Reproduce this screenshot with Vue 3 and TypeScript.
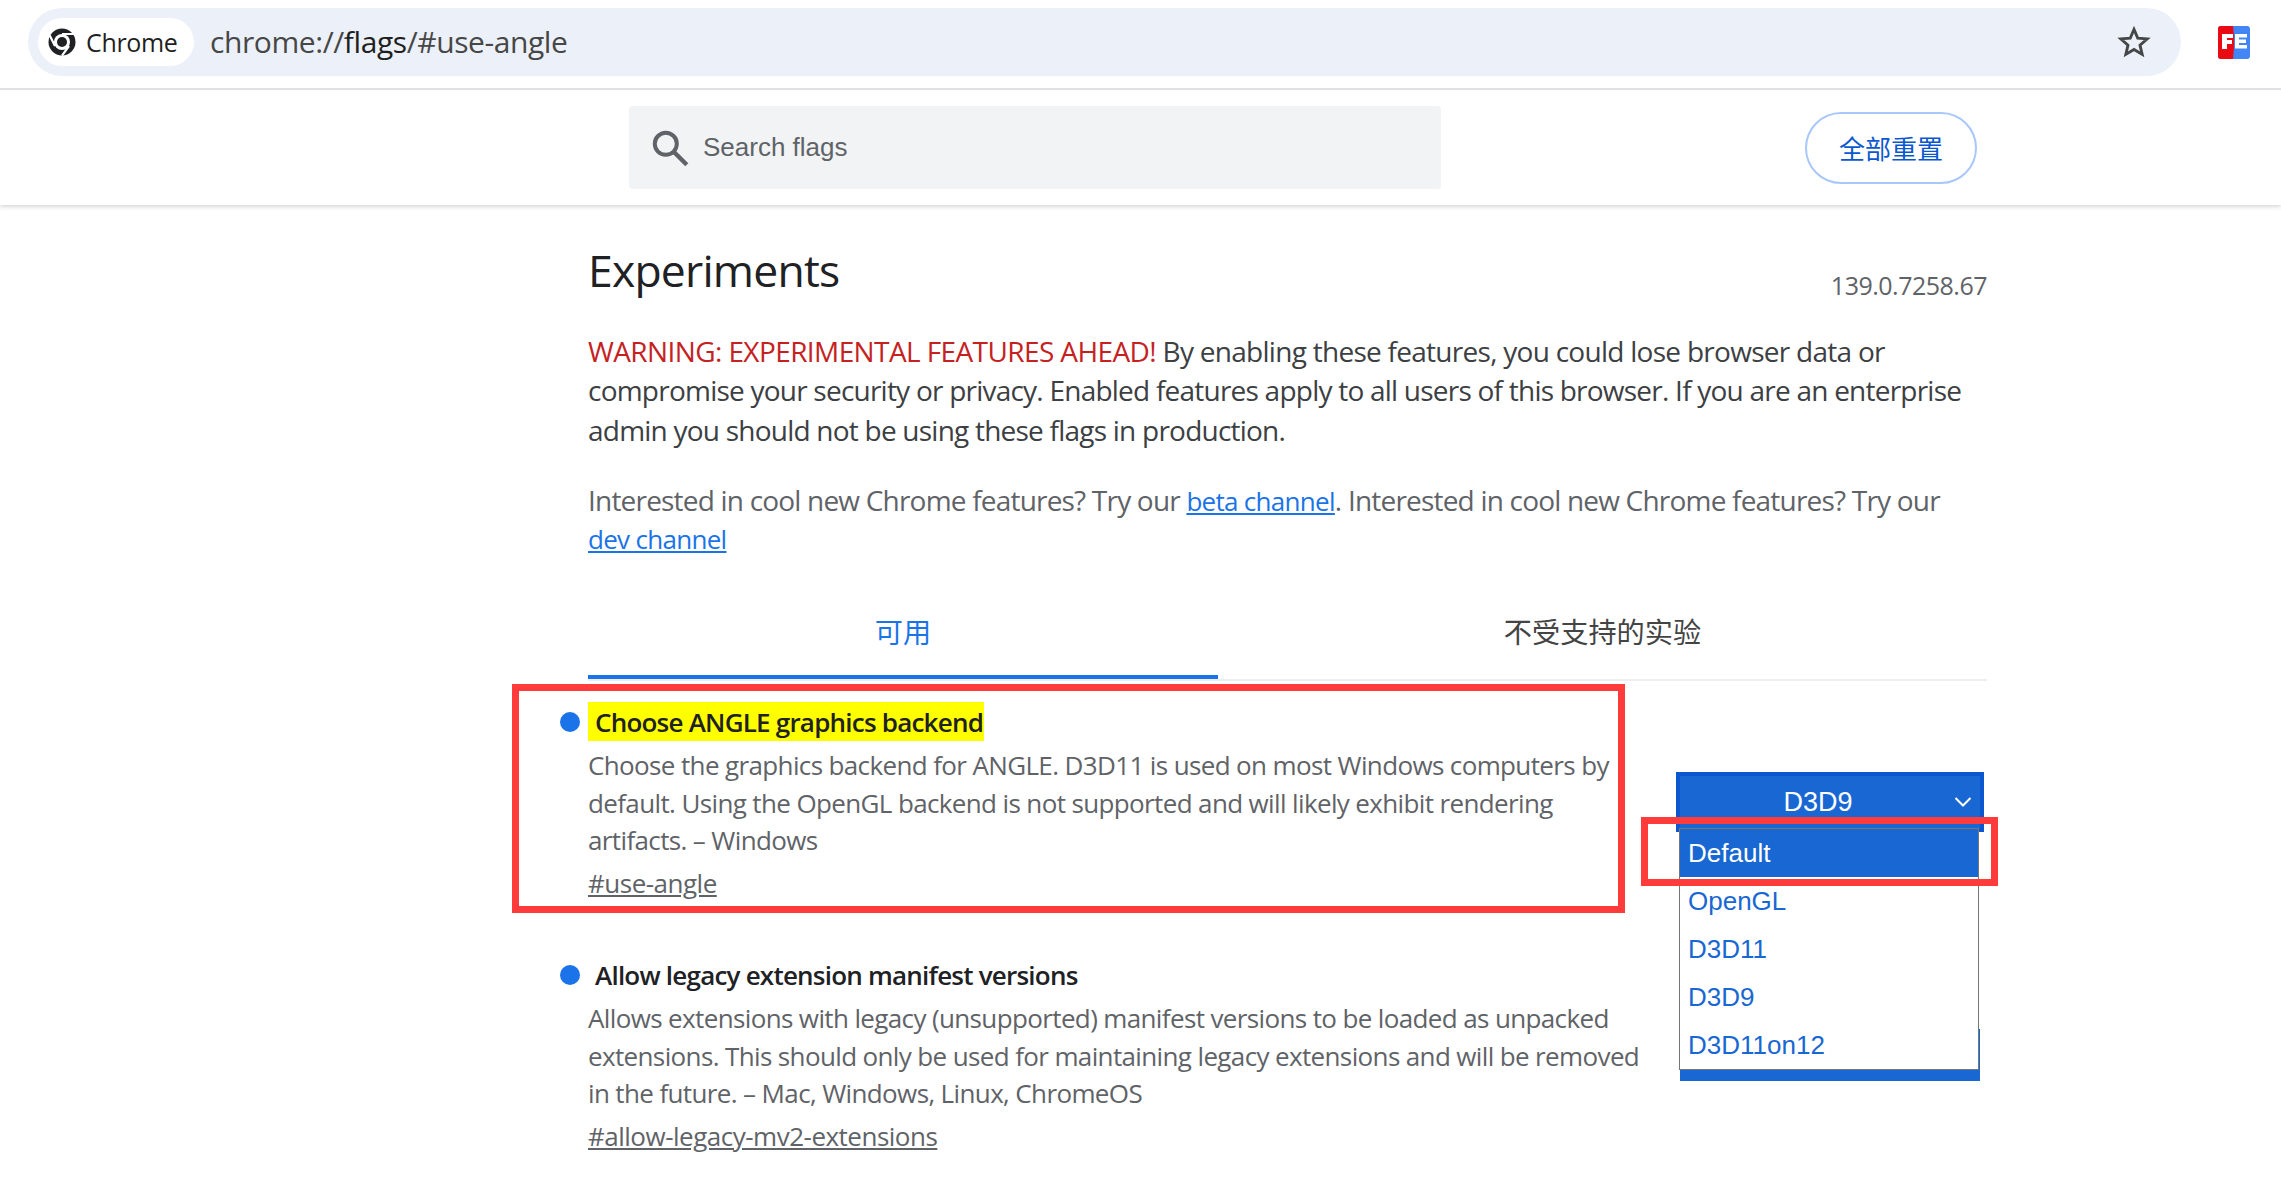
<script setup lang="ts">
const options: string[] = ['Default', 'OpenGL', 'D3D11', 'D3D9', 'D3D11on12']
</script>

<template>
  <div class="page">
    <div class="toolbar">
      <div class="omnibox">
        <div class="chip">
          <svg class="chrome-logo" width="28" height="28" viewBox="0 0 28 28">
            <circle cx="14" cy="14" r="13.5" fill="#202124" />
            <circle cx="14" cy="14" r="8" fill="#fff" />
            <circle cx="14" cy="14" r="5" fill="#202124" />
            <path d="M14 6H27M7 18L1.500 7M21 18L14 27.600" stroke="#fff" stroke-width="2.200" fill="none" />
          </svg>
          <span>Chrome</span>
        </div>
        <div class="url">chrome://<b>flags</b>/#use-angle</div>
        <svg class="star" width="36" height="36" viewBox="0 0 24 24">
          <path d="M12 3.6l2.5 5.8 6.3.55-4.8 4.15 1.45 6.15L12 17l-5.45 3.25L8 14.1 3.2 9.95l6.3-.55z" fill="none" stroke="#444746" stroke-width="1.900" stroke-linejoin="miter" />
        </svg>
      </div>
      <svg class="fe" width="32" height="33" viewBox="0 0 32 33">
        <rect width="32" height="33" rx="3" fill="#4285f4" />
        <path d="M3 0H15Q17 16 15 33H3Q0 33 0 30V3Q0 0 3 0Z" fill="#ea0a12" />
        <path d="M4 8H15V12H9V14H14V18H9V23H4Z" fill="#fff" />
        <path d="M17 8H29V11.500H21V13.500H28V17H21V19H29V22.500H17Z" fill="#fff" />
      </svg>
    </div>

    <div class="searchband">
      <div class="searchbox">
        <svg width="42" height="42" viewBox="0 0 40 40">
          <circle cx="16" cy="16" r="10.500" fill="none" stroke="#5f6368" stroke-width="3.800" />
          <path d="M24 24L36 36" stroke="#5f6368" stroke-width="4.200" />
        </svg>
        <span>Search flags</span>
      </div>
      <button class="reset">全部重置</button>
    </div>

    <main class="content">
      <div class="head">
        <h1>Experiments</h1>
        <span class="version">139.0.7258.67</span>
      </div>
      <p class="warn"><span class="red">WARNING: EXPERIMENTAL FEATURES AHEAD!</span> <span class="rest">By enabling these features, you could lose browser data or</span><br />compromise your security or privacy. Enabled features apply to all users of this browser. If you are an enterprise<br />admin you should not be using these flags in production.</p>
      <p class="channel">Interested in cool new Chrome features? Try our <a>beta channel</a>. Interested in cool new Chrome features? Try our<br /><a>dev channel</a></p>

      <div class="tabs">
        <div class="tab active">可用</div>
        <div class="tab">不受支持的实验</div>
      </div>

      <section class="flag first">
        <i class="dot"></i>
        <h2><mark>Choose ANGLE graphics backend</mark></h2>
        <p>Choose the graphics backend for ANGLE. D3D11 is used on most Windows computers by<br />default. Using the OpenGL backend is not supported and will likely exhibit rendering<br />artifacts. – Windows</p>
        <a class="hash">#use-angle</a>
        <div class="select-peek"></div>
        <div class="select">
          <span>D3D9</span>
          <svg width="18" height="12" viewBox="0 0 18 12"><path d="M1.500 2L9 9.500L16.500 2" fill="none" stroke="#fff" stroke-width="2" /></svg>
        </div>
        <ul class="list">
          <li v-for="(o, i) in options" :key="o" :class="{ sel: i === 0 }">{{ o }}</li>
        </ul>
        <div class="box box-a"></div>
        <div class="box box-b"></div>
      </section>

      <section class="flag">
        <i class="dot"></i>
        <h2 class="plain">Allow legacy extension manifest versions</h2>
        <p>Allows extensions with legacy (unsupported) manifest versions to be loaded as unpacked<br />extensions. This should only be used for maintaining legacy extensions and will be removed<br />in the future. – Mac, Windows, Linux, ChromeOS</p>
        <a class="hash">#allow-legacy-mv2-extensions</a>
      </section>
    </main>
  </div>
</template>

<style>
html, body { margin: 0; background: #fff; }
</style>

<style scoped>
.page {
  width: 2281px;
  height: 1192px;
  overflow: hidden;
  background: #fff;
  font-family: "Open Sans", "Noto Sans CJK SC", sans-serif;
  color: #5f6368;
}
.toolbar {
  box-sizing: border-box;
  padding: 8px 31px 0 28px;
  display: flex;
  justify-content: space-between;
  align-items: flex-start;
  border-bottom: 2px solid #e1e3e6;
  height: 90px;
}
.omnibox {
  width: 2153px;
  height: 68px;
  border-radius: 34px;
  background: #ecf1f9;
  display: flex;
  align-items: center;
  padding: 0 29px 0 10px;
  box-sizing: border-box;
}
.chip {
  width: 156px;
  height: 48px;
  border-radius: 24px;
  background: #fff;
  display: flex;
  align-items: center;
  gap: 10px;
  padding-left: 10px;
  box-sizing: border-box;
  font-size: 25px;
  color: #1f1f1f;
  letter-spacing: -0.35px;
}
.url {
  margin-left: 16px;
  margin-top: -2px;
  flex: 1;
  font-size: 30px;
  color: #474747;
  letter-spacing: -0.42px;
}
.url b { font-weight: 400; color: #1f1f1f; }
.fe { margin-top: 18px; }
.searchband {
  height: 115px;
  box-shadow: 0 2px 4px rgba(60, 64, 67, 0.2);
  position: relative;
  display: flex;
  align-items: center;
  padding-left: 629px;
  box-sizing: border-box;
}
.searchbox {
  width: 812px;
  height: 83px;
  background: #f1f3f4;
  border-radius: 4px;
  display: flex;
  align-items: center;
  gap: 12px;
  padding-left: 20px;
  box-sizing: border-box;
  font-family: "Liberation Sans", sans-serif;
  font-size: 26px;
  color: #5f6368;
}
.reset {
  margin-left: 364px;
  width: 172px;
  height: 72px;
  border: 2px solid #a8c7fa;
  border-radius: 36px;
  background: #fff;
  color: #0b57d0;
  font-family: "Noto Sans CJK SC", sans-serif;
  font-size: 26px;
  padding: 0;
}
.content {
  margin-left: 588px;
  width: 1399px;
}
.head {
  display: flex;
  justify-content: space-between;
  align-items: flex-end;
  height: 98px;
}
h1 {
  margin: 0;
  font-size: 44.500px;
  font-weight: 400;
  color: #202124;
  line-height: 60px;
  letter-spacing: -0.8px;
  padding-bottom: 3px;
}
.version { font-size: 25px; line-height: 30px; padding-bottom: 3px; letter-spacing: -0.5px; }
.warn {
  margin: 29px 0 0;
  font-size: 28px;
  line-height: 39.300px;
  color: #3c4043;
  letter-spacing: -0.77px;
  white-space: nowrap;
}
.red { color: #c5221f; letter-spacing: -0.6px; }
.rest { letter-spacing: -0.72px; }
.channel {
  margin: 32px 0 0;
  font-size: 28px;
  line-height: 37.500px;
  color: #5f6368;
  letter-spacing: -0.8px;
  white-space: nowrap;
}
.channel a { color: #1a73e8; text-decoration: underline; font-size: 26px; letter-spacing: -0.7px; }
.tabs {
  margin-top: 29px;
  display: flex;
  border-bottom: 2px solid #eceff1;
  height: 91px;
  font-family: "Noto Sans CJK SC", sans-serif;
}
.tab {
  flex: 769 0 0;
  text-align: center;
  font-size: 28.200px;
  line-height: 58px;
  color: #444;
  padding-top: 14px;
  box-sizing: border-box;
}
.tab.active {
  flex: 630 0 0;
  color: #1a73e8;
  border-bottom: 4px solid #1a73e8;
  border-radius: 4px 4px 0 0;
}
.flag {
  position: relative;
  height: 232px;
  padding-top: 21px;
  white-space: nowrap;
}
.dot {
  position: absolute;
  left: -28px;
  top: 31px;
  width: 20px;
  height: 20px;
  border-radius: 50%;
  background: #1a73e8;
}
h2 {
  margin: 0;
  font-size: 26px;
  font-weight: 600;
  line-height: 37px;
  padding-top: 2px;
  color: #202124;
  letter-spacing: -0.78px;
}
mark {
  background: #ffff00;
  color: #202124;
  padding: 2px 1px 0 7px;
  margin-top: -2px;
  display: inline-block;
  vertical-align: top;
}
h2.plain { padding-left: 7px; }
.flag p {
  margin: 6.500px 0 0;
  font-size: 26px;
  line-height: 37.500px;
  color: #5f6368;
  letter-spacing: -0.63px;
}
.hash {
  display: block;
  margin-top: 5px;
  font-size: 26px;
  line-height: 36px;
  color: #5f6368;
  letter-spacing: -0.5px;
  text-decoration: underline;
}
.select {
  position: absolute;
  left: 1088px;
  top: 91px;
  width: 308px;
  height: 60px;
  box-sizing: border-box;
  background: #1967d2;
  border: 4px solid #0b57d0;
  color: #fff;
  font-family: "Liberation Sans", sans-serif;
  font-size: 27px;
  display: flex;
  align-items: center;
  justify-content: center;
  padding: 2px 24px 0 0;
}
.select svg { position: absolute; right: 8px; top: 20px; }
.select-peek {
  position: absolute;
  left: 1092px;
  top: 348px;
  width: 300px;
  height: 52px;
  background: #1967d2;
}
.list {
  position: absolute;
  left: 1091px;
  top: 147px;
  width: 300px;
  height: 242px;
  box-sizing: border-box;
  margin: 0;
  padding: 0;
  list-style: none;
  background: #fff;
  border: 1px solid #767676;
  font-family: "Liberation Sans", sans-serif;
  font-size: 26px;
  color: #1967d2;
}
.list li {
  height: 48px;
  line-height: 49px;
  padding-left: 8px;
}
.list li.sel { background: #1967d2; color: #fff; }
.box {
  position: absolute;
  box-sizing: border-box;
  border: 7px solid #ff3b3b;
}
.box-a { left: -76px; top: 3px; width: 1113px; height: 229px; }
.box-b { left: 1053px; top: 136px; width: 357px; height: 69px; }
</style>
